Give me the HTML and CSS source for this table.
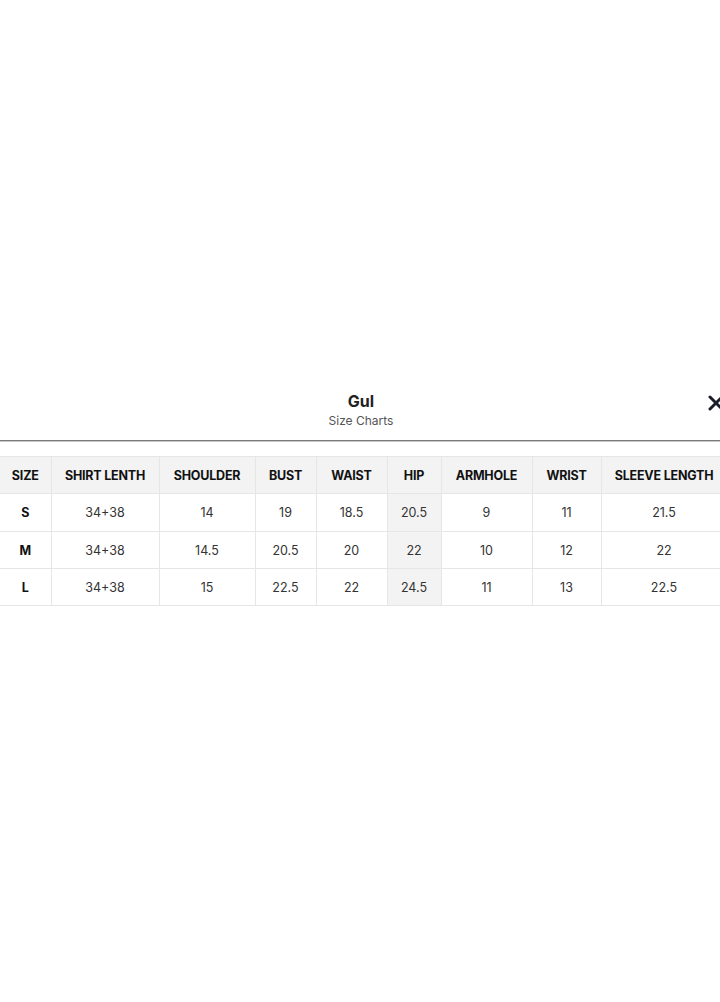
FILE: index.html
```html
<!DOCTYPE html>
<html>
<head>
<meta charset="utf-8">
<link rel="stylesheet" href="styles.css">
</head>
<body>
<div class="modal">
  <div class="modal-head">
    <div class="title">Gul</div>
    <div class="subtitle">Size Charts</div>
    <svg class="close" width="16" height="16" viewBox="0 0 16 16"><path d="M2 2 L14 14 M14 2 L2 14" stroke="#1b1d2a" stroke-width="3" stroke-linecap="round"/></svg>
  </div>
  <div class="divider"></div>
  <div class="table-wrap">
    <table class="chart">
      <colgroup>
        <col style="width:51px"><col style="width:108px"><col style="width:96px"><col style="width:61px"><col style="width:71px"><col style="width:54px"><col style="width:91px"><col style="width:69px"><col style="width:126px">
      </colgroup>
      <thead>
        <tr><th>SIZE</th><th>SHIRT LENTH</th><th>SHOULDER</th><th>BUST</th><th>WAIST</th><th class="hl">HIP</th><th>ARMHOLE</th><th>WRIST</th><th>SLEEVE LENGTH</th></tr>
      </thead>
      <tbody>
        <tr class="first"><th>S</th><td>34+38</td><td>14</td><td>19</td><td>18.5</td><td class="hl">20.5</td><td>9</td><td>11</td><td>21.5</td></tr>
        <tr><th>M</th><td>34+38</td><td>14.5</td><td>20.5</td><td>20</td><td class="hl">22</td><td>10</td><td>12</td><td>22</td></tr>
        <tr><th>L</th><td>34+38</td><td>15</td><td>22.5</td><td>22</td><td class="hl">24.5</td><td>11</td><td>13</td><td>22.5</td></tr>
      </tbody>
    </table>
  </div>
</div>
</body>
</html>
```
FILE: styles.css
```css
html, body {
  margin: 0;
  padding: 0;
  background: #fff;
  overflow: hidden;
}
body {
  font-family: "Inter", "Open Sans", sans-serif;
  color: #222;
  width: 720px;
  height: 1002px;
}
.modal {
  padding-top: 390px;
}
.modal-head {
  position: relative;
  text-align: center;
  height: 50px;
}
.title {
  font-size: 16px;
  font-weight: 700;
  color: #222;
  line-height: 22px;
  padding-left: 2px;
}
.subtitle {
  font-size: 12px;
  color: #555;
  line-height: 18px;
  padding-left: 2px;
}
.close {
  position: absolute;
  left: 708px;
  top: 5px;
}
.divider {
  height: 1px;
  background: #7a7a7a;
  border-bottom: 1px solid #c8c8c8;
  margin-bottom: 14px;
}
.table-wrap {
  width: 720px;
  overflow: hidden;
}
.chart {
  border-collapse: collapse;
  table-layout: fixed;
  width: 727px;
  font-size: 12.5px;
}
.chart th, .chart td {
  text-align: center;
  border: 1px solid #e6e6e6;
  height: 36px;
  padding: 0;
}
.chart tr.first > * {
  height: 37px;
}
.chart thead th {
  background: #f3f3f3;
  font-weight: 700;
  color: #111;
  font-size: 12.5px;
  letter-spacing: -0.2px;
}
.chart tbody th {
  font-weight: 700;
  color: #111;
}
.chart td {
  color: #333;
}
.chart .hl {
  background: #f3f3f3;
}
.chart tr > :first-child {
  border-left: none;
}
```
